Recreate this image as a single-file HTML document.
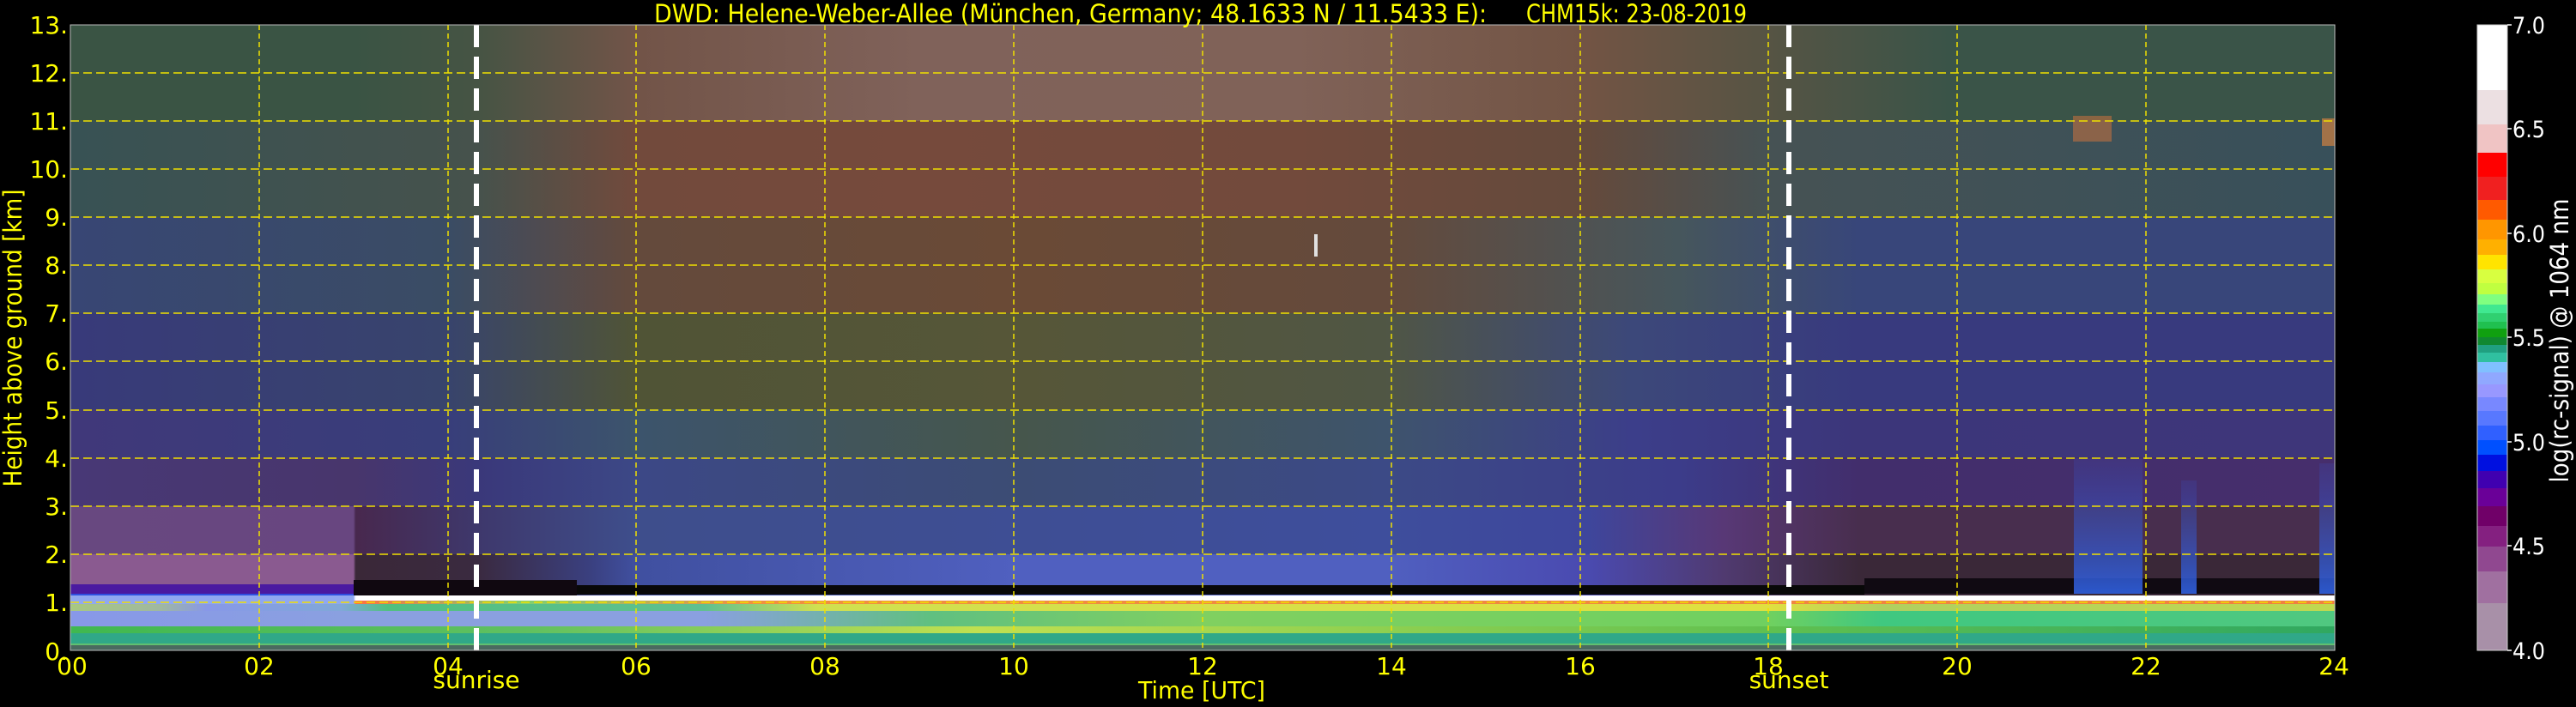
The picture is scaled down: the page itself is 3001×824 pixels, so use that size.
<!DOCTYPE html>
<html><head><meta charset="utf-8"><style>
html,body{margin:0;padding:0;background:#000;}
svg{display:block;}
text{font-family:"DejaVu Sans","Liberation Sans",sans-serif;}
</style></head><body>
<svg width="3001" height="824" viewBox="0 0 3001 824" xmlns="http://www.w3.org/2000/svg">
<defs>
<linearGradient id="r12" x1="0" x2="1" y1="0" y2="0">
<stop offset="0" stop-color="#3a5444"/><stop offset="0.125" stop-color="#3a5444"/><stop offset="0.18" stop-color="#465444"/><stop offset="0.25" stop-color="#725448"/><stop offset="0.375" stop-color="#80625a"/><stop offset="0.54" stop-color="#806258"/><stop offset="0.67" stop-color="#725444"/><stop offset="0.75" stop-color="#565444"/><stop offset="0.83" stop-color="#3a5448"/><stop offset="1" stop-color="#3a5448"/></linearGradient>
<linearGradient id="r10" x1="0" x2="1" y1="0" y2="0">
<stop offset="0" stop-color="#385254"/><stop offset="0.18" stop-color="#46524c"/><stop offset="0.25" stop-color="#724a3c"/><stop offset="0.375" stop-color="#764a3c"/><stop offset="0.54" stop-color="#724a3c"/><stop offset="0.67" stop-color="#644a3c"/><stop offset="0.75" stop-color="#465254"/><stop offset="1" stop-color="#38505a"/></linearGradient>
<linearGradient id="r8" x1="0" x2="1" y1="0" y2="0">
<stop offset="0" stop-color="#384674"/><stop offset="0.167" stop-color="#3a4c64"/><stop offset="0.25" stop-color="#644a3c"/><stop offset="0.42" stop-color="#6a4a36"/><stop offset="0.58" stop-color="#644a3c"/><stop offset="0.71" stop-color="#46565c"/><stop offset="0.79" stop-color="#38467a"/><stop offset="1" stop-color="#38467a"/></linearGradient>
<linearGradient id="r6" x1="0" x2="1" y1="0" y2="0">
<stop offset="0" stop-color="#383a7a"/><stop offset="0.167" stop-color="#38446c"/><stop offset="0.25" stop-color="#505436"/><stop offset="0.42" stop-color="#565638"/><stop offset="0.58" stop-color="#505644"/><stop offset="0.69" stop-color="#3c487a"/><stop offset="0.79" stop-color="#383a7e"/><stop offset="1" stop-color="#383a7e"/></linearGradient>
<linearGradient id="r45" x1="0" x2="1" y1="0" y2="0">
<stop offset="0" stop-color="#40387a"/><stop offset="0.167" stop-color="#383e7a"/><stop offset="0.25" stop-color="#3c546c"/><stop offset="0.42" stop-color="#46564c"/><stop offset="0.58" stop-color="#3e546c"/><stop offset="0.69" stop-color="#3c3e8a"/><stop offset="0.79" stop-color="#3c367a"/><stop offset="1" stop-color="#3e367a"/></linearGradient>
<linearGradient id="r34" x1="0" x2="1" y1="0" y2="0">
<stop offset="0" stop-color="#483876"/><stop offset="0.125" stop-color="#48366c"/><stop offset="0.18" stop-color="#3a387a"/><stop offset="0.25" stop-color="#3c4886"/><stop offset="0.42" stop-color="#3c4c74"/><stop offset="0.58" stop-color="#3c4a86"/><stop offset="0.71" stop-color="#3c3c8a"/><stop offset="0.79" stop-color="#422e6c"/><stop offset="1" stop-color="#462e6c"/></linearGradient>
<linearGradient id="r23" x1="0" x2="1" y1="0" y2="0">
<stop offset="0" stop-color="#684880"/><stop offset="0.125" stop-color="#684680"/><stop offset="0.126" stop-color="#48284e"/><stop offset="0.18" stop-color="#3e386c"/><stop offset="0.25" stop-color="#3e4e8c"/><stop offset="0.42" stop-color="#3e4e94"/><stop offset="0.58" stop-color="#3e4e9c"/><stop offset="0.67" stop-color="#3e469c"/><stop offset="0.73" stop-color="#583876"/><stop offset="0.79" stop-color="#482e4e"/><stop offset="1" stop-color="#482e4e"/></linearGradient>
<linearGradient id="r12b" x1="0" x2="1" y1="0" y2="0">
<stop offset="0" stop-color="#8a5a90"/><stop offset="0.125" stop-color="#8a5a90"/><stop offset="0.126" stop-color="#3a2838"/><stop offset="0.18" stop-color="#3a2a40"/><stop offset="0.23" stop-color="#3a4080"/><stop offset="0.25" stop-color="#4050a0"/><stop offset="0.42" stop-color="#5060c0"/><stop offset="0.58" stop-color="#5060c0"/><stop offset="0.67" stop-color="#4a4ab0"/><stop offset="0.73" stop-color="#503a70"/><stop offset="0.79" stop-color="#3a2838"/><stop offset="1" stop-color="#3a2838"/></linearGradient>
<linearGradient id="b1" x1="0" x2="1" y1="0" y2="0">
<stop offset="0" stop-color="#90a8f0"/><stop offset="0.125" stop-color="#90a8f0"/><stop offset="0.126" stop-color="#ffffff"/><stop offset="1" stop-color="#ffffff"/></linearGradient>
<linearGradient id="b2" x1="0" x2="1" y1="0" y2="0">
<stop offset="0" stop-color="#90a8f0"/><stop offset="0.125" stop-color="#90a8f0"/><stop offset="0.126" stop-color="#ff7040"/><stop offset="0.2" stop-color="#80d070"/><stop offset="0.3" stop-color="#f09040"/><stop offset="1" stop-color="#f08040"/></linearGradient>
<linearGradient id="b3" x1="0" x2="1" y1="0" y2="0">
<stop offset="0" stop-color="#a8c880"/><stop offset="0.04" stop-color="#a0b8a0"/><stop offset="0.06" stop-color="#8898e8"/><stop offset="0.12" stop-color="#80a8d8"/><stop offset="0.14" stop-color="#50c080"/><stop offset="0.28" stop-color="#60c090"/><stop offset="0.33" stop-color="#d0e050"/><stop offset="0.75" stop-color="#e0e040"/><stop offset="0.8" stop-color="#b0d060"/><stop offset="1" stop-color="#c0d850"/></linearGradient>
<linearGradient id="b4" x1="0" x2="1" y1="0" y2="0">
<stop offset="0" stop-color="#8898e8"/><stop offset="0.125" stop-color="#8aa0e0"/><stop offset="0.28" stop-color="#8aa0e0"/><stop offset="0.38" stop-color="#60c080"/><stop offset="0.5" stop-color="#80d060"/><stop offset="0.75" stop-color="#70d060"/><stop offset="0.8" stop-color="#40c880"/><stop offset="1" stop-color="#50c880"/></linearGradient>
<linearGradient id="b5" x1="0" x2="1" y1="0" y2="0">
<stop offset="0" stop-color="#40b850"/><stop offset="0.2" stop-color="#60c060"/><stop offset="0.4" stop-color="#c0e050"/><stop offset="0.75" stop-color="#60c050"/><stop offset="1" stop-color="#30a860"/></linearGradient>
<linearGradient id="bluecol" x1="0" x2="0" y1="0" y2="1">
<stop offset="0" stop-color="#3a50c0" stop-opacity="0.2"/><stop offset="1" stop-color="#3060e0" stop-opacity="0.9"/></linearGradient>
</defs>

<g>
<rect x="82" y="29" width="2638" height="112" fill="url(#r12)"/>
<rect x="82" y="141" width="2638" height="112" fill="url(#r10)"/>
<rect x="82" y="253" width="2638" height="112" fill="url(#r8)"/>
<rect x="82" y="365" width="2638" height="112" fill="url(#r6)"/>
<rect x="82" y="477" width="2638" height="56" fill="url(#r45)"/>
<rect x="82" y="533" width="2638" height="57" fill="url(#r34)"/>
<rect x="82" y="590" width="2638" height="56" fill="url(#r23)"/>
<rect x="82" y="646" width="2638" height="48" fill="url(#r12b)"/>
</g>
<rect x="412" y="676" width="260" height="18" fill="#100810"/>
<rect x="672" y="682" width="1500" height="11" fill="#080808"/>
<rect x="2172" y="674" width="548" height="18" fill="#100a12"/>
<rect x="82" y="681" width="330" height="11" fill="#4a1aa0"/>
<rect x="82" y="692" width="330" height="3" fill="#3050e0"/>
<rect x="2416" y="534" width="80" height="158" fill="url(#bluecol)"/>
<rect x="2541" y="560" width="18" height="132" fill="url(#bluecol)"/>
<rect x="2702" y="540" width="18" height="152" fill="url(#bluecol)"/>
<rect x="2415" y="135" width="45" height="30" fill="#c07040" opacity="0.6"/>
<rect x="2705" y="138" width="15" height="32" fill="#d08040" opacity="0.7"/>
<rect x="1531" y="273" width="4" height="26" fill="#e0e0e0"/>
<rect x="82" y="694" width="2638" height="6" fill="url(#b1)"/>
<rect x="82" y="700" width="2638" height="4" fill="url(#b2)"/>
<rect x="82" y="704" width="2638" height="8" fill="url(#b3)"/>
<rect x="82" y="712" width="2638" height="18" fill="url(#b4)"/>
<rect x="82" y="730" width="2638" height="8" fill="url(#b5)"/>
<rect x="82" y="738" width="2638" height="12" fill="#30a888"/>
<rect x="82" y="750" width="2638" height="8" fill="#4a6a60"/>
<rect x="82" y="750" width="2638" height="2" fill="#60c070"/>

<g stroke="#f0e000" stroke-width="1.5" stroke-dasharray="10,5" fill="none">
<line x1="82" x2="2720" y1="702" y2="702"/><line x1="82" x2="2720" y1="646" y2="646"/>
<line x1="82" x2="2720" y1="590" y2="590"/><line x1="82" x2="2720" y1="534" y2="534"/>
<line x1="82" x2="2720" y1="478" y2="478"/><line x1="82" x2="2720" y1="421" y2="421"/>
<line x1="82" x2="2720" y1="365" y2="365"/><line x1="82" x2="2720" y1="309" y2="309"/>
<line x1="82" x2="2720" y1="253" y2="253"/><line x1="82" x2="2720" y1="197" y2="197"/>
<line x1="82" x2="2720" y1="141" y2="141"/><line x1="82" x2="2720" y1="85" y2="85"/>
</g>
<g stroke="#f0e000" stroke-width="1.5" stroke-dasharray="6,4" fill="none">
<line x1="302" x2="302" y1="29" y2="758"/><line x1="522" x2="522" y1="29" y2="758"/>
<line x1="741" x2="741" y1="29" y2="758"/><line x1="961" x2="961" y1="29" y2="758"/>
<line x1="1181" x2="1181" y1="29" y2="758"/><line x1="1401" x2="1401" y1="29" y2="758"/>
<line x1="1621" x2="1621" y1="29" y2="758"/><line x1="1841" x2="1841" y1="29" y2="758"/>
<line x1="2060" x2="2060" y1="29" y2="758"/><line x1="2280" x2="2280" y1="29" y2="758"/>
<line x1="2500" x2="2500" y1="29" y2="758"/>
</g>
<g stroke="#ffffff" stroke-width="6" stroke-dasharray="26,11" fill="none">
<line x1="555" x2="555" y1="29" y2="758"/>
<line x1="2084" x2="2084" y1="29" y2="758"/>
</g>
<rect x="82" y="29" width="2638" height="729" fill="none" stroke="#bbbbbb" stroke-width="1"/>

<text x="762" y="26" font-size="29" fill="#ffff00" textLength="970" lengthAdjust="spacingAndGlyphs">DWD: Helene-Weber-Allee (München, Germany; 48.1633 N / 11.5433 E):</text>
<text x="1778" y="26" font-size="29" fill="#ffff00" textLength="257" lengthAdjust="spacingAndGlyphs">CHM15k: 23-08-2019</text>

<g font-size="28" fill="#ffff00" text-anchor="end">
<text x="79" y="769">0.</text><text x="79" y="712">1.</text><text x="79" y="656">2.</text>
<text x="79" y="600">3.</text><text x="79" y="544">4.</text><text x="79" y="488">5.</text>
<text x="79" y="431">6.</text><text x="79" y="375">7.</text><text x="79" y="319">8.</text>
<text x="79" y="263">9.</text><text x="79" y="207">10.</text><text x="79" y="151">11.</text>
<text x="79" y="95">12.</text><text x="79" y="39">13.</text>
</g>
<text transform="translate(25,394) rotate(-90)" font-size="29" fill="#ffff00" text-anchor="middle" textLength="347" lengthAdjust="spacingAndGlyphs">Height above ground [km]</text>

<g font-size="28" fill="#ffff00" text-anchor="middle">
<text x="84" y="786">00</text><text x="302" y="786">02</text><text x="522" y="786">04</text>
<text x="741" y="786">06</text><text x="961" y="786">08</text><text x="1181" y="786">10</text>
<text x="1401" y="786">12</text><text x="1621" y="786">14</text><text x="1841" y="786">16</text>
<text x="2060" y="786">18</text><text x="2280" y="786">20</text><text x="2500" y="786">22</text>
<text x="2719" y="786">24</text>
<text x="555" y="802">sunrise</text>
<text x="2084" y="802">sunset</text>
<text x="1400" y="814" textLength="148" lengthAdjust="spacingAndGlyphs">Time [UTC]</text>
</g>

<g>
<rect x="2886" y="29" width="35" height="76" fill="#ffffff"/>
<rect x="2886" y="105" width="35" height="40" fill="#ece0e2"/>
<rect x="2886" y="145" width="35" height="33" fill="#f0c4c4"/>
<rect x="2886" y="178" width="35" height="28" fill="#ff0000"/>
<rect x="2886" y="206" width="35" height="27" fill="#f02020"/>
<rect x="2886" y="233" width="35" height="23" fill="#ff5a00"/>
<rect x="2886" y="256" width="35" height="23" fill="#ff9600"/>
<rect x="2886" y="279" width="35" height="18" fill="#ffb000"/>
<rect x="2886" y="297" width="35" height="17" fill="#ffe400"/>
<rect x="2886" y="314" width="35" height="16" fill="#d8ff40"/>
<rect x="2886" y="330" width="35" height="13" fill="#c0ff40"/>
<rect x="2886" y="343" width="35" height="12" fill="#80ff80"/>
<rect x="2886" y="355" width="35" height="10" fill="#40e890"/>
<rect x="2886" y="365" width="35" height="10" fill="#30d070"/>
<rect x="2886" y="375" width="35" height="8" fill="#20c050"/>
<rect x="2886" y="383" width="35" height="10" fill="#10a010"/>
<rect x="2886" y="393" width="35" height="9" fill="#108830"/>
<rect x="2886" y="402" width="35" height="9" fill="#20a080"/>
<rect x="2886" y="411" width="35" height="11" fill="#30c0a0"/>
<rect x="2886" y="422" width="35" height="12" fill="#80c0ff"/>
<rect x="2886" y="434" width="35" height="14" fill="#90a8ff"/>
<rect x="2886" y="448" width="35" height="15" fill="#9898ff"/>
<rect x="2886" y="463" width="35" height="16" fill="#7888ff"/>
<rect x="2886" y="479" width="35" height="17" fill="#5878ff"/>
<rect x="2886" y="496" width="35" height="17" fill="#3060ff"/>
<rect x="2886" y="513" width="35" height="17" fill="#0050ff"/>
<rect x="2886" y="530" width="35" height="19" fill="#0010e0"/>
<rect x="2886" y="549" width="35" height="20" fill="#4000b0"/>
<rect x="2886" y="569" width="35" height="21" fill="#6a0098"/>
<rect x="2886" y="590" width="35" height="23" fill="#700068"/>
<rect x="2886" y="613" width="35" height="24" fill="#842080"/>
<rect x="2886" y="637" width="35" height="29" fill="#904890"/>
<rect x="2886" y="666" width="35" height="37" fill="#a070a0"/>
<rect x="2886" y="703" width="35" height="55" fill="#a890a8"/>
<rect x="2886" y="29" width="35" height="729" fill="none" stroke="#cccccc" stroke-width="1"/>
</g>
<g stroke="#ffffff" stroke-width="1.5">
<line x1="2921" x2="2926" y1="29" y2="29"/><line x1="2921" x2="2926" y1="150" y2="150"/>
<line x1="2921" x2="2926" y1="272" y2="272"/><line x1="2921" x2="2926" y1="393" y2="393"/>
<line x1="2921" x2="2926" y1="515" y2="515"/><line x1="2921" x2="2926" y1="636" y2="636"/>
<line x1="2921" x2="2926" y1="758" y2="758"/>
</g>
<g font-size="27" fill="#ffffff">
<text x="2927" y="39" textLength="38" lengthAdjust="spacingAndGlyphs">7.0</text>
<text x="2927" y="160" textLength="38" lengthAdjust="spacingAndGlyphs">6.5</text>
<text x="2927" y="282" textLength="38" lengthAdjust="spacingAndGlyphs">6.0</text>
<text x="2927" y="403" textLength="38" lengthAdjust="spacingAndGlyphs">5.5</text>
<text x="2927" y="525" textLength="38" lengthAdjust="spacingAndGlyphs">5.0</text>
<text x="2927" y="646" textLength="38" lengthAdjust="spacingAndGlyphs">4.5</text>
<text x="2927" y="768" textLength="38" lengthAdjust="spacingAndGlyphs">4.0</text>
</g>
<text transform="translate(2992,397) rotate(-90)" font-size="29" fill="#ffffff" text-anchor="middle" textLength="331" lengthAdjust="spacingAndGlyphs">log(rc-signal) @ 1064 nm</text>
</svg>
</body></html>
